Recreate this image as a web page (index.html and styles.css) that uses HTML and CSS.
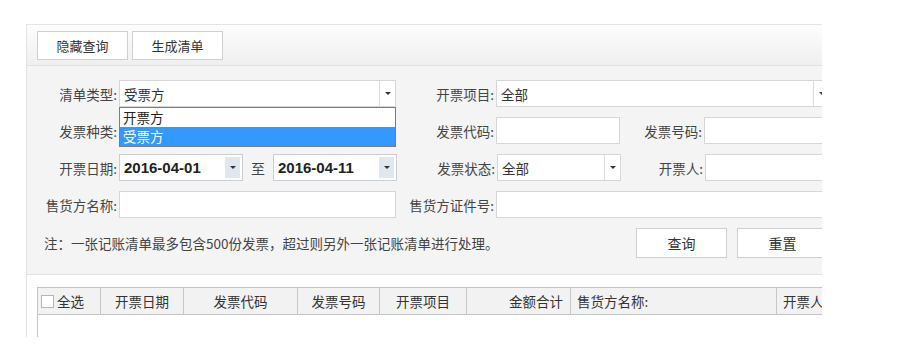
FILE: index.html
```html
<!DOCTYPE html>
<html lang="zh-CN">
<head>
    <meta charset="UTF-8">
    <meta name="viewport" content="width=device-width, initial-scale=1.0">
    <title>记账清单</title>
    <link rel="stylesheet" href="styles.css">
</head>
<body>
    <div class="panel">
        <div class="toolbar">
            <button class="tool-btn">隐藏查询</button>
            <button class="tool-btn">生成清单</button>
        </div>

        <form class="query">
            <div class="row">
                <label class="lbl lbl-1">清单类型:</label>
                <div class="field field-1">
                    <div class="select">
                        <span class="value">受票方</span>
                        <span class="arrow"></span>
                    </div>
                    <ul class="drop-list">
                        <li>开票方</li>
                        <li class="active">受票方</li>
                    </ul>
                </div>
                <label class="lbl lbl-2">开票项目:</label>
                <div class="field field-wide">
                    <div class="select">
                        <span class="value">全部</span>
                        <span class="arrow"></span>
                    </div>
                </div>
            </div>

            <div class="row">
                <label class="lbl lbl-1">发票种类:</label>
                <div class="field field-1"><input type="text" class="input"></div>
                <label class="lbl lbl-2">发票代码:</label>
                <div class="field field-2"><input type="text" class="input"></div>
                <label class="lbl lbl-3">发票号码:</label>
                <div class="field field-3"><input type="text" class="input"></div>
            </div>

            <div class="row">
                <label class="lbl lbl-1">开票日期:</label>
                <div class="field field-date">
                    <div class="select date">
                        <span class="value">2016-04-01</span>
                        <span class="arrow"></span>
                    </div>
                </div>
                <span class="to">至</span>
                <div class="field field-date">
                    <div class="select date">
                        <span class="value">2016-04-11</span>
                        <span class="arrow"></span>
                    </div>
                </div>
                <label class="lbl lbl-2">发票状态:</label>
                <div class="field field-2">
                    <div class="select">
                        <span class="value">全部</span>
                        <span class="arrow"></span>
                    </div>
                </div>
                <label class="lbl lbl-3">开票人:</label>
                <div class="field field-3"><input type="text" class="input"></div>
            </div>

            <div class="row">
                <label class="lbl lbl-1">售货方名称:</label>
                <div class="field field-1"><input type="text" class="input"></div>
                <label class="lbl lbl-2">售货方证件号:</label>
                <div class="field field-wide"><input type="text" class="input"></div>
            </div>

            <div class="row row-actions">
                <p class="note">注：一张记账清单最多包含500份发票，超过则另外一张记账清单进行处理。</p>
                <button type="button" class="act-btn">查询</button>
                <button type="reset" class="act-btn">重置</button>
            </div>
        </form>

        <div class="grid">
            <div class="grid-head">
                <div class="col col-check"><span class="checkbox"></span>全选</div>
                <div class="col">开票日期</div>
                <div class="col">发票代码</div>
                <div class="col">发票号码</div>
                <div class="col">开票项目</div>
                <div class="col col-right">金额合计</div>
                <div class="col col-left">售货方名称:</div>
                <div class="col col-left">开票人</div>
            </div>
            <div class="grid-body"></div>
        </div>
    </div>
</body>
</html>
```

FILE: styles.css
```css
* {
    margin: 0;
    padding: 0;
    box-sizing: border-box;
}

body {
    background-color: #fff;
    font-family: "Noto Sans CJK SC", "Liberation Sans", sans-serif;
    font-size: 13.5px;
    color: #333;
}

.panel {
    margin: 24px 0 0 26px;
    width: 796px;
    height: 313px;
    border-top: 1px solid #e3e3e3;
    border-left: 1px solid #e3e3e3;
    overflow: hidden;
}

/* toolbar */
.toolbar {
    height: 41px;
    padding: 6px 0 0 10px;
    display: flex;
    gap: 4px;
    background: linear-gradient(#fdfdfd, #efefef);
    border-bottom: 1px solid #e0e0e0;
}

.tool-btn {
    width: 91px;
    height: 29px;
    background-color: #fff;
    border: 1px solid #cfcfcf;
    font-family: inherit;
    font-size: 13px;
    color: #333;
}

/* query form */
.query {
    background-color: #f4f4f4;
    padding: 14px 0 16px;
    border-bottom: 1px solid #e2e2e2;
}

.row {
    display: flex;
    align-items: center;
    height: 27px;
    margin-bottom: 10px;
}

.row > * {
    flex: none;
}

.lbl {
    text-align: right;
    padding-right: 2px;
    color: #444;
    white-space: nowrap;
}

.lbl-1 { width: 92px; }
.lbl-2 { width: 100px; }
.lbl-3 { width: 84px; }

.field {
    height: 27px;
    position: relative;
}

.field-1 { width: 277px; }
.field-2 { width: 124px; }
.field-3 { width: 140px; }
.field-wide { width: 344px; }
.field-date { width: 124px; }

.input,
.select {
    width: 100%;
    height: 100%;
    border: 1px solid #d6d6d6;
    background-color: #fff;
}

.select {
    display: flex;
    align-items: center;
}

.select .value {
    flex: 1;
    padding-left: 4px;
    white-space: nowrap;
}

.select .arrow {
    flex: none;
    width: 16px;
    height: 100%;
    border-left: 1px solid #dcdcdc;
    display: flex;
    align-items: center;
    justify-content: center;
}

.select .arrow::after {
    content: "";
    border-left: 3px solid transparent;
    border-right: 3px solid transparent;
    border-top: 3px solid #333;
}

.field-wide .select .arrow {
    margin-right: 10px;
}

.select.date {
    border-color: #c9ced6;
}

.select.date .value {
    font-family: "Liberation Sans", sans-serif;
    font-size: 15px;
    font-weight: bold;
    color: #222;
}

.select.date .arrow {
    width: 15px;
    height: 21px;
    margin-right: 2px;
    border-left: none;
    background-color: #dfe7f0;
}

.to {
    width: 30px;
    text-align: center;
    font-size: 14px;
    color: #444;
}

/* open dropdown list */
.drop-list {
    position: absolute;
    top: 27px;
    left: 0;
    width: 277px;
    height: 40px;
    list-style: none;
    background-color: #fff;
    border: 1px solid #7c7c7c;
    z-index: 2;
}

.drop-list li {
    height: 19px;
    line-height: 19px;
    padding-left: 3px;
    color: #222;
}

.drop-list li.active {
    background-color: #3399ff;
    color: #fff;
}

.row-actions {
    height: 30px;
    margin-bottom: 0;
}

.note {
    width: 609px;
    padding-left: 17px;
    font-size: 13.5px;
    color: #444;
    white-space: nowrap;
}

.act-btn {
    width: 91px;
    height: 30px;
    margin-right: 10px;
    background-color: #fff;
    border: 1px solid #cfcfcf;
    font-family: inherit;
    font-size: 14px;
    color: #333;
}

/* result grid */
.grid {
    margin: 12px 0 0 10px;
}

.grid-head {
    display: grid;
    grid-template-columns: 63px 83px 114px 82px 87px 104px 206px 80px;
    height: 28px;
    background-color: #f2f2f2;
    border-top: 1px solid #c4c4c4;
    border-bottom: 1px solid #c4c4c4;
    border-left: 1px solid #c4c4c4;
}

.col {
    display: flex;
    align-items: center;
    justify-content: center;
    border-right: 1px solid #c8c8c8;
    font-size: 13.5px;
    color: #333;
    white-space: nowrap;
}

.col-check {
    justify-content: flex-start;
    padding-left: 3px;
}

.col-right {
    justify-content: flex-end;
    padding-right: 7px;
}

.col-left {
    justify-content: flex-start;
    padding-left: 6px;
}

.checkbox {
    width: 13px;
    height: 13px;
    margin-right: 3px;
    border: 1px solid #b5b5b5;
    background-color: #fff;
}

.grid-body {
    height: 30px;
    border-left: 1px solid #c4c4c4;
    background-color: #fff;
}
```
